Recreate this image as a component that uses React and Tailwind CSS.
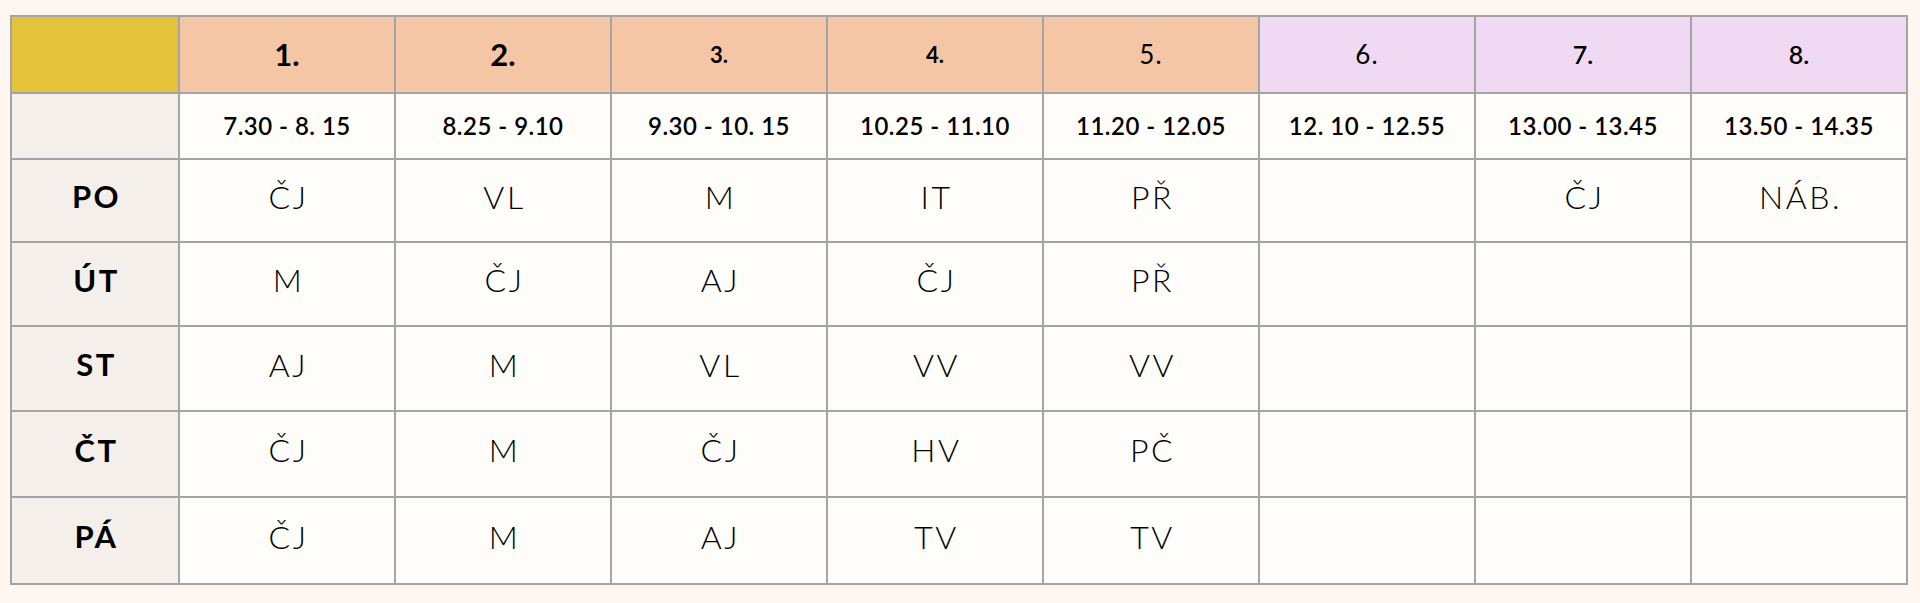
import React from 'react'

const periods = [
  { label: '1.', time: '7.30 - 8. 15', cls: 'bg-[#f5c6a5] text-[31px] font-bold' },
  { label: '2.', time: '8.25 - 9.10', cls: 'bg-[#f5c6a5] text-[31px] font-bold' },
  { label: '3.', time: '9.30 - 10. 15', cls: 'bg-[#f5c6a5] text-[22px] font-bold' },
  { label: '4.', time: '10.25 - 11.10', cls: 'bg-[#f5c6a5] text-[22px] font-bold' },
  { label: '5.', time: '11.20 - 12.05', cls: 'bg-[#f5c6a5] text-[26px] font-normal tracking-[0.04em]' },
  { label: '6.', time: '12. 10 - 12.55', cls: 'bg-[#f0d9f3] text-[26px] font-normal tracking-[0.04em]' },
  { label: '7.', time: '13.00 - 13.45', cls: 'bg-[#f0d9f3] text-[25px] font-semibold' },
  { label: '8.', time: '13.50 - 14.35', cls: 'bg-[#f0d9f3] text-[25px] font-semibold' },
]

// Rozvrh hodin
const days = [
  { day: 'PO', h: 'h-[83px]', lessons: ['ČJ', 'VL', 'M', 'IT', 'PŘ', '', 'ČJ', 'NÁB.'] },
  { day: 'ÚT', h: 'h-[84px]', lessons: ['M', 'ČJ', 'AJ', 'ČJ', 'PŘ', '', '', ''] },
  { day: 'ST', h: 'h-[85px]', lessons: ['AJ', 'M', 'VL', 'VV', 'VV', '', '', ''] },
  { day: 'ČT', h: 'h-[86px]', lessons: ['ČJ', 'M', 'ČJ', 'HV', 'PČ', '', '', ''] },
  { day: 'PÁ', h: 'h-[87px]', lessons: ['ČJ', 'M', 'AJ', 'TV', 'TV', '', '', ''] },
]

const cell = 'border-2 border-[#a4a4a4] text-center align-middle p-0'

function App() {
  return (
    <div
      className="min-h-[603px] w-full bg-[#fef6f1] pt-[15px] pl-[10px] text-black"
      style={{ fontFamily: 'Lato, "Open Sans", sans-serif' }}
    >
      <table className="table-fixed border-collapse w-[1896px]">
        <colgroup>
          <col className="w-[168px]" />
          {periods.map((p) => (
            <col key={p.label} className="w-[216px]" />
          ))}
        </colgroup>
        <tbody>
          <tr className="h-[77px]">
            <td className={`${cell} bg-[#e2c33a]`}></td>
            {periods.map((p) => (
              <td key={p.label} className={`${cell} ${p.cls}`}>
                {p.label}
              </td>
            ))}
          </tr>
          <tr className="h-[66px]">
            <td className={`${cell} bg-[#f5efeb]`}></td>
            {periods.map((p) => (
              <td
                key={p.label}
                className={`${cell} bg-[#fffdfa] text-[24px] font-semibold tracking-[0.02em]`}
              >
                {p.time}
              </td>
            ))}
          </tr>
          {days.map((d) => (
            <tr key={d.day} className={d.h}>
              <td className={`${cell} bg-[#f5efeb] text-[31px] font-bold tracking-[0.08em] pb-2 pl-[3px]`}>
                {d.day}
              </td>
              {d.lessons.map((l, i) => (
                <td
                  key={i}
                  className={`${cell} bg-[#fffdfa] text-[32px] font-light tracking-[0.08em] pb-2 pl-[3px]`}
                >
                  {l}
                </td>
              ))}
            </tr>
          ))}
        </tbody>
      </table>
    </div>
  )
}

export default App
